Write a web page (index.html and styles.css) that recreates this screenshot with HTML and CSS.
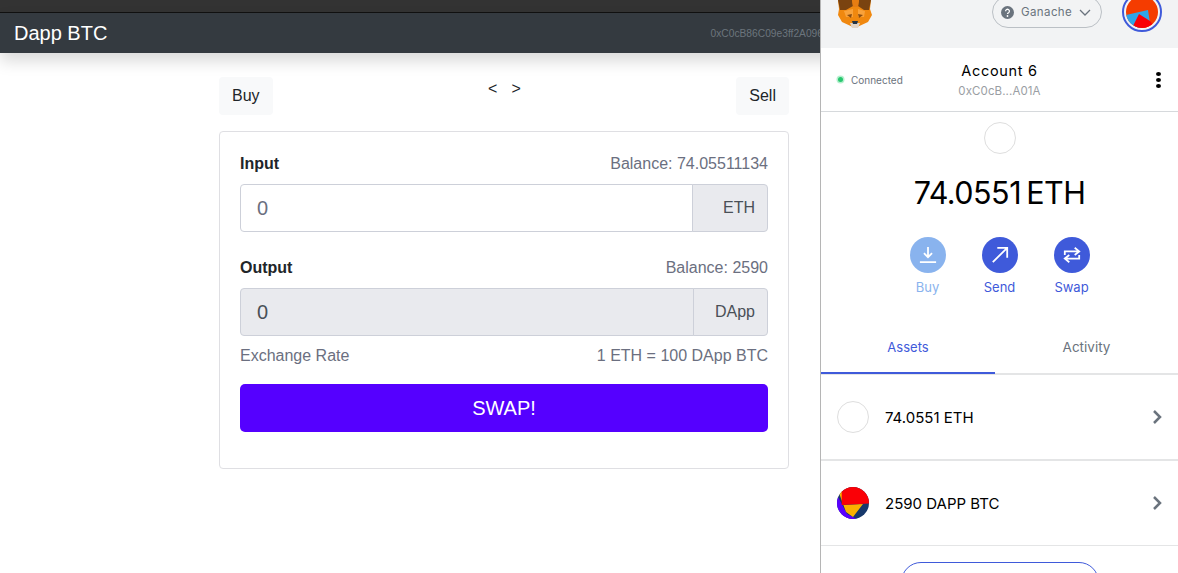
FILE: index.html
```html
<!DOCTYPE html>
<html>
<head>
  <title>Dapp BTC</title>
  <link rel="stylesheet" href="styles.css">
</head>
<body>

  <div class="browser-strip"></div>

  <nav class="navbar">
    <a class="brand">Dapp BTC</a>
    <small class="nav-account">0xC0cB86C09e3ff2A096</small>
  </nav>

  <main class="page">
    <div class="tabs">
      <button class="tab-btn">Buy</button>
      <span class="arrows">&lt;<span class="arrow-gap"></span>&gt;</span>
      <button class="tab-btn">Sell</button>
    </div>

    <div class="card">
      <div class="label-row">
        <b>Input</b>
        <span class="muted">Balance: 74.05511134</span>
      </div>
      <div class="input-group">
        <div class="field">0</div>
        <div class="addon">ETH</div>
      </div>

      <div class="label-row label-row-output">
        <b>Output</b>
        <span class="muted">Balance: 2590</span>
      </div>
      <div class="input-group">
        <div class="field field-off">0</div>
        <div class="addon addon-dapp">DApp</div>
      </div>

      <div class="rate-row muted">
        <span>Exchange Rate</span>
        <span>1 ETH = 100 DApp BTC</span>
      </div>

      <button class="swap-btn">SWAP!</button>
    </div>
  </main>

  <aside class="wallet">
    <header class="wallet-top">
      <svg class="fox" width="34" height="28" viewBox="0 0 34 28">
        <polygon points="0,0 33,0 32,9 34,15 30,22 17,28 4,22 0,15 1,9" fill="#f0880f"/>
        <polygon points="0,0 14,0 15,6 8,10 2,10" fill="#7a4310"/>
        <polygon points="33,0 21,0 20,6 26,10 31,10" fill="#7a4310"/>
        <polygon points="14,0 21,0 20,7 15,7" fill="#e77d12"/>
        <polygon points="6,11 15,9 15,17 8,17" fill="#f9a23b"/>
        <polygon points="27,11 20,9 20,17 26,17" fill="#f9a23b"/>
        <polygon points="9,15 14,14 13,18" fill="#8a4d12"/>
        <polygon points="25,15 20,14 21,18" fill="#8a4d12"/>
        <polygon points="12,23 22,23 20,28 14,28" fill="#e2d3c4"/>
        <polygon points="14,21 20,21 19,24 15,24" fill="#233447"/>
      </svg>
      <div class="network">
        <svg width="13" height="13" viewBox="0 0 13 13">
          <circle cx="6.5" cy="6.5" r="6.5" fill="#6a737d"/>
          <path d="M4.6 5.2a1.9 1.9 0 1 1 2.9 1.6c-.7.4-1 .7-1 1.3" fill="none" stroke="#fff" stroke-width="1.3"/>
          <circle cx="6.5" cy="10" r=".9" fill="#fff"/>
        </svg>
        <span>Ganache</span>
        <svg width="12" height="7" viewBox="0 0 12 7">
          <path d="M1 1l5 5 5-5" fill="none" stroke="#6a737d" stroke-width="1.3"/>
        </svg>
      </div>
      <div class="avatar">
        <svg width="32" height="32" viewBox="0 0 32 32">
          <rect width="32" height="32" fill="#f53c00"/>
          <polygon points="0,19 22,14 24,27 9,36 0,36" fill="#2fa6e8"/>
          <polygon points="13,18 24,25 27,29 27,36 13,36 7,30" fill="#fa0006"/>
        </svg>
      </div>
    </header>

    <div class="account-row">
      <div class="connected"><i class="dot"></i>Connected</div>
      <div class="account-name">
        <div class="name">Account 6</div>
        <div class="addr">0xC0cB...A01A</div>
      </div>
      <div class="kebab"><i></i><i></i><i></i></div>
    </div>

    <div class="overview">
      <div class="eth-logo"></div>
      <div class="big-balance">74.0551 ETH</div>
      <div class="actions">
        <div class="action action-off">
          <div class="round">
            <svg viewBox="0 0 20 20" fill="none" stroke="#fff" stroke-width="2">
              <path d="M10 1v11M5.5 8l4.5 4.5L14.5 8M1 18h18"/>
            </svg>
          </div>
          <span>Buy</span>
        </div>
        <div class="action">
          <div class="round">
            <svg viewBox="0 0 20 20" fill="none" stroke="#fff" stroke-width="2">
              <path d="M2 18L18 2M7 2h11v11"/>
            </svg>
          </div>
          <span>Send</span>
        </div>
        <div class="action">
          <div class="round">
            <svg viewBox="0 0 20 20" fill="none" stroke="#fff" stroke-width="2">
              <path d="M2 10V6h15M13 2l5 4-5 4M18 10v4H3M7 10l-5 4 5 4"/>
            </svg>
          </div>
          <span>Swap</span>
        </div>
      </div>
    </div>

    <div class="wallet-tabs">
      <div class="wallet-tab active">Assets</div>
      <div class="wallet-tab">Activity</div>
    </div>

    <div class="asset asset-first">
      <div class="eth-logo small"></div>
      <span class="asset-text">74.0551 ETH</span>
      <svg class="chev" width="10" height="16" viewBox="0 0 10 16"><path d="M2 2l6 6-6 6" fill="none" stroke="#6a737d" stroke-width="2.500"/></svg>
    </div>
    <div class="asset">
      <svg class="token" width="32" height="32" viewBox="0 0 32 32">
        <rect width="32" height="32" fill="#17386b"/>
        <polygon points="0,8 10,27 20,32 0,32" fill="#5a00ff"/>
        <polygon points="2,6 5,3 5,18 26,17 16,30 9,25" fill="#fbb000"/>
        <polygon points="4.700,0 32,0 32,16.500 4.700,18" fill="#fa0006"/>
      </svg>
      <span class="asset-text">2590 DAPP BTC</span>
      <svg class="chev" width="10" height="16" viewBox="0 0 10 16"><path d="M2 2l6 6-6 6" fill="none" stroke="#6a737d" stroke-width="2.500"/></svg>
    </div>
    <div class="add-token"></div>
  </aside>

</body>
</html>
```

FILE: styles.css
```css
html, body {
  height: 100%;
}

body {
  margin: 0;
  background-color: #fff;
  font-family: 'Liberation Sans', Arial, sans-serif;
  color: #212529;
  overflow: hidden;
}

.browser-strip {
  height: 12px;
  background-color: #333;
  border-bottom: 1px solid #111;
}

.navbar {
  height: 40px;
  background-color: #343a40;
  box-shadow: 0 8px 16px rgba(0, 0, 0, 0.15);
  display: flex;
  justify-content: space-between;
  align-items: center;
  padding-left: 14px;
  overflow: hidden;
}

.brand {
  color: #fff;
  font-size: 20px;
}

.nav-account {
  color: #6c757d;
  font-size: 10.24px;
  margin-right: 355px;
  white-space: nowrap;
}

.page {
  width: 570px;
  margin-left: 219px;
}

.tabs {
  display: flex;
  justify-content: space-between;
  margin-top: 24px;
}

.tab-btn {
  background-color: #f8f9fa;
  border: none;
  border-radius: 4px;
  color: #212529;
  font-family: inherit;
  font-size: 16px;
  height: 38px;
  padding: 0 13px;
}

.arrows {
  font-size: 16px;
  margin-top: 3px;
}

.arrow-gap {
  display: inline-block;
  width: 14px;
}

.card {
  margin-top: 16px;
  height: 338px;
  box-sizing: border-box;
  border: 1px solid #dfdfe3;
  border-radius: 4px;
  padding: 20px;
}

.label-row, .rate-row {
  display: flex;
  justify-content: space-between;
  font-size: 16px;
  line-height: 24px;
}

.label-row b {
  color: #212529;
}

.label-row-output {
  margin-top: 24px;
}

.muted {
  color: #6b6f80;
}

.input-group {
  display: flex;
  height: 48px;
  margin-top: 8px;
}

.field {
  flex: 1;
  box-sizing: border-box;
  border: 1px solid #cdd0d9;
  border-radius: 4px 0 0 4px;
  padding-left: 16px;
  font-size: 20px;
  line-height: 46px;
  color: #6b6f80;
}

.field-off {
  background-color: #e9eaee;
  color: #495057;
}

.addon {
  box-sizing: border-box;
  width: 76px;
  border: 1px solid #cdd0d9;
  border-radius: 0 4px 4px 0;
  margin-left: -1px;
  background-color: #e9eaee;
  color: #495057;
  font-size: 16px;
  line-height: 46px;
  text-align: right;
  padding-right: 12px;
}

.addon-dapp {
  width: 75px;
}

.rate-row {
  margin-top: 8px;
}

.swap-btn {
  display: block;
  width: 100%;
  height: 48px;
  margin-top: 16px;
  background-color: #5500ff;
  border: none;
  border-radius: 5px;
  color: #fff;
  font-family: inherit;
  font-size: 20px;
}

/* wallet popup on top of the page */
.wallet {
  position: absolute;
  top: 0;
  left: 820px;
  width: 357px;
  height: 573px;
  background-color: #fff;
  border-left: 1px solid #b5b5b5;
  font-family: Inter, 'Noto Sans', sans-serif;
  overflow: hidden;
}

.wallet-top {
  height: 48px;
  background-color: #f2f3f4;
  position: relative;
}

.fox {
  display: block;
  margin-left: 17px;
}

.network {
  position: absolute;
  top: -4px;
  left: 171px;
  width: 110px;
  height: 32px;
  box-sizing: border-box;
  border: 1px solid #bbc0c5;
  border-radius: 16px;
  display: flex;
  align-items: center;
  gap: 7px;
  padding-left: 8px;
  font-size: 11.5px;
  color: #6a737d;
  letter-spacing: 0.4px;
}

.avatar {
  position: absolute;
  top: -8px;
  left: 301px;
  width: 32px;
  height: 32px;
  padding: 2px;
  border: 2px solid #3f5ada;
  border-radius: 50%;
  overflow: hidden;
}

.avatar svg {
  display: block;
  border-radius: 50%;
}

.account-row {
  height: 63px;
  border-bottom: 1px solid #d6d9dc;
  display: grid;
  grid-template-columns: 1fr auto 1fr;
  align-items: center;
}

.connected {
  display: flex;
  align-items: center;
  gap: 8px;
  margin-left: 17px;
  font-size: 10px;
  color: #6a737d;
}

.dot {
  width: 5px;
  height: 5px;
  border-radius: 50%;
  background-color: #28c76f;
  box-shadow: 0 0 0 1.500px #b6f0cf;
}

.account-name {
  text-align: center;
}

.name {
  font-size: 14.5px;
  letter-spacing: 0.7px;
  color: #000;
}

.addr {
  font-size: 11.5px;
  letter-spacing: 0.1px;
  color: #9a9ea3;
  margin-top: 5px;
}

.kebab {
  justify-self: end;
  margin-right: 17px;
  display: flex;
  flex-direction: column;
  gap: 2px;
}

.kebab i {
  display: block;
  width: 5px;
  height: 4px;
  border-radius: 50%;
  background-color: #000;
}

.overview {
  display: flex;
  flex-direction: column;
  align-items: center;
  margin-top: 10px;
}

.eth-logo {
  box-sizing: border-box;
  width: 32px;
  height: 32px;
  border: 1px solid #dedede;
  border-radius: 50%;
  flex: none;
}

.big-balance {
  font-size: 30.5px;
  line-height: 40px;
  color: #000;
  margin-top: 19px;
  letter-spacing: -0.5px;
  word-spacing: -3px;
}

.actions {
  display: flex;
  gap: 36px;
  margin-top: 24px;
}

.action {
  width: 36px;
  display: flex;
  flex-direction: column;
  align-items: center;
  font-size: 13px;
  line-height: 16px;
  color: #3f5ada;
}

.round {
  width: 36px;
  height: 36px;
  border-radius: 50%;
  background-color: #3f5ada;
  display: flex;
  align-items: center;
  justify-content: center;
  margin-bottom: 6px;
}

.round svg {
  width: 18px;
  height: 18px;
}

.action-off {
  color: #89b3ee;
}

.action-off .round {
  background-color: #89b3ee;
}

.wallet-tabs {
  display: flex;
  margin-top: 32px;
  border-bottom: 2px solid #e4e5e6;
}

.wallet-tab {
  flex: 1;
  height: 46px;
  box-sizing: border-box;
  text-align: center;
  line-height: 40px;
  font-size: 13.5px;
  color: #6a737d;
}

.wallet-tab.active {
  flex: 0 0 174px;
  font-size: 13px;
  color: #3f5ada;
  border-bottom: 2px solid #3f5ada;
  margin-bottom: -1px;
  height: 47px;
}

.asset {
  height: 84px;
  border-bottom: 1px solid #e4e5e6;
  display: flex;
  align-items: center;
  padding-left: 16px;
  font-size: 15px;
  color: #000;
}

.asset-first {
  border-bottom-width: 2px;
}

.asset-text {
  margin-left: 16px;
  flex: 1;
}

.token {
  flex: none;
  border-radius: 50%;
}

.chev {
  margin-right: 16px;
}

.add-token {
  width: 198px;
  height: 40px;
  margin: 16px 0 0 80px;
  box-sizing: border-box;
  border: 1px solid #3f5ada;
  border-radius: 20px;
}
```
